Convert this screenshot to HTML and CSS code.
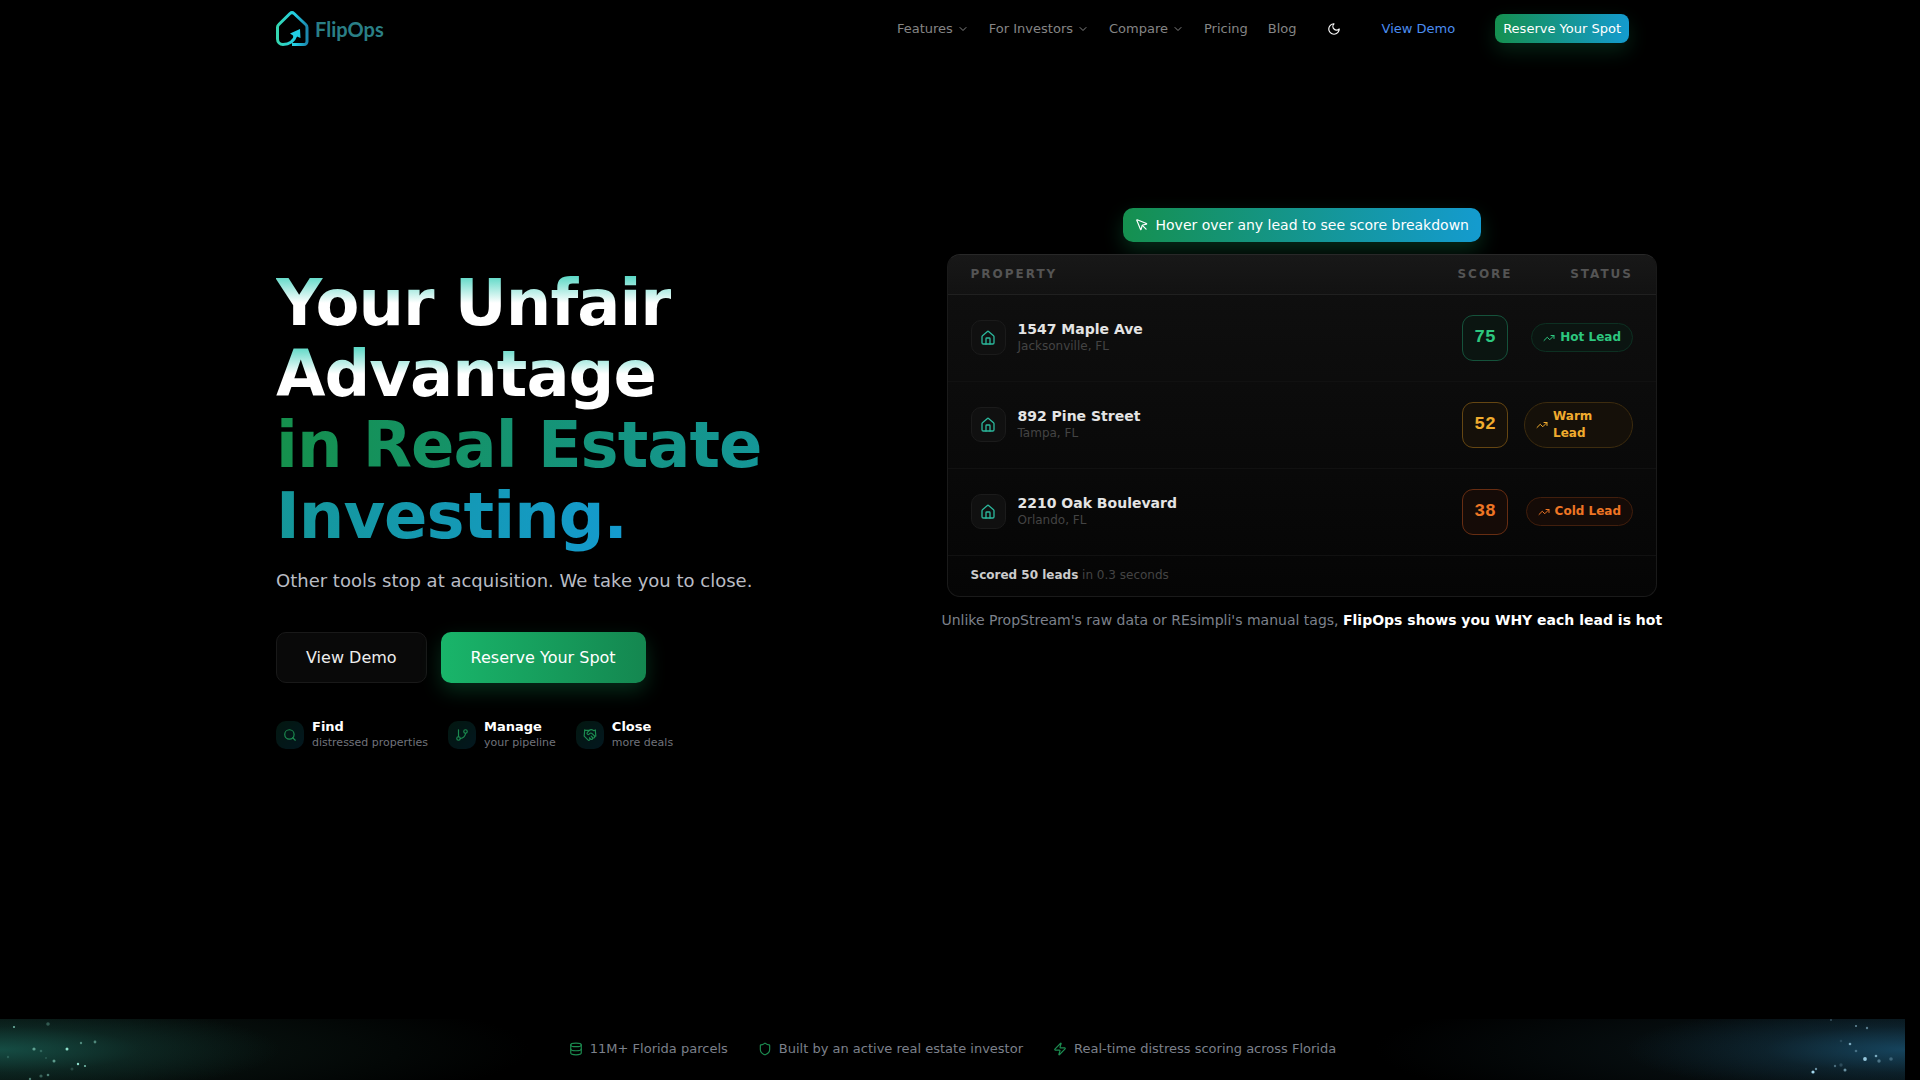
FILE: index.html
```html
<!DOCTYPE html>
<html lang="en">
<head>
    <meta charset="UTF-8">
    <meta name="viewport" content="width=device-width, initial-scale=1.0">
    <title>FlipOps</title>
    <link rel="stylesheet" href="styles.css">
</head>
<body>
    <!-- shared icons -->
    <svg class="sprite" aria-hidden="true">
        <symbol id="chevron" viewBox="0 0 24 24"><path d="m6 9 6 6 6-6"/></symbol>
        <symbol id="house" viewBox="0 0 24 24">
            <path d="M15 21v-8a1 1 0 0 0-1-1h-4a1 1 0 0 0-1 1v8"/>
            <path d="M3 10a2 2 0 0 1 .709-1.528l7-5.999a2 2 0 0 1 2.582 0l7 5.999A2 2 0 0 1 21 10v9a2 2 0 0 1-2 2H5a2 2 0 0 1-2-2z"/>
        </symbol>
        <symbol id="trend" viewBox="0 0 24 24">
            <path d="M16 7h6v6"/><path d="m22 7-8.5 8.5-5-5L2 17"/>
        </symbol>
    </svg>

    <header class="header">
        <div class="container header-inner">
            <a href="#" class="logo">
                <svg class="logo-mark" viewBox="0 0 34 36" fill="none">
                    <defs>
                        <linearGradient id="mark" x1="0" y1="0" x2="1" y2="0">
                            <stop offset="0" stop-color="#35d6b0"/>
                            <stop offset=".6" stop-color="#22cfe6"/>
                            <stop offset="1" stop-color="#1b86ad"/>
                        </linearGradient>
                    </defs>
                    <path d="M16 33.500h12a3 3 0 0 0 3-3V16.500a4 4 0 0 0-1.300-3L18 2.500a3 3 0 0 0-4 0L2.800 13.500a4 4 0 0 0-1.300 3V28a5.500 5.500 0 0 0 5.500 5.500c6 0 11-3.500 13-9.500" stroke="url(#mark)" stroke-width="3" stroke-linejoin="round"/>
                    <path d="M14 22.500 24 18l.500 9-3.500-1.500-3 3-1-4z" fill="#22cfe6"/>
                </svg>
                <span class="logo-text">FlipOps</span>
            </a>
            <nav class="nav">
                <button class="nav-item" type="button">Features <svg class="icon"><use href="#chevron"/></svg></button>
                <button class="nav-item" type="button">For Investors <svg class="icon"><use href="#chevron"/></svg></button>
                <button class="nav-item" type="button">Compare <svg class="icon"><use href="#chevron"/></svg></button>
                <a class="nav-item" href="#">Pricing</a>
                <a class="nav-item" href="#">Blog</a>
            </nav>
            <button class="theme-toggle" type="button" aria-label="Toggle theme">
                <svg class="icon" viewBox="0 0 24 24"><path d="M12 3a6 6 0 0 0 9 9 9 9 0 1 1-9-9Z"/></svg>
            </button>
            <a class="demo-link" href="#">View Demo</a>
            <a class="header-cta" href="#">Reserve Your Spot</a>
        </div>
    </header>

    <main class="container hero">
        <div class="hero-copy">
            <h1>
                <span class="title-top">Your Unfair<br>Advantage</span><br>
                <span class="title-accent">in Real Estate<br>Investing.</span>
            </h1>
            <p class="subtitle">Other tools stop at acquisition. We take you to close.</p>
            <div class="actions">
                <a class="btn btn-dark" href="#">View Demo</a>
                <a class="btn btn-green" href="#">Reserve Your Spot</a>
            </div>
            <ul class="features">
                <li>
                    <span class="feature-icon">
                        <svg class="icon" viewBox="0 0 24 24"><circle cx="11" cy="11" r="8"/><path d="m21 21-4.300-4.300"/></svg>
                    </span>
                    <div><strong>Find</strong><small>distressed properties</small></div>
                </li>
                <li>
                    <span class="feature-icon">
                        <svg class="icon" viewBox="0 0 24 24"><path d="M6 3v12"/><circle cx="18" cy="6" r="3"/><circle cx="6" cy="18" r="3"/><path d="M18 9a9 9 0 0 1-9 9"/></svg>
                    </span>
                    <div><strong>Manage</strong><small>your pipeline</small></div>
                </li>
                <li>
                    <span class="feature-icon">
                        <svg class="icon" viewBox="0 0 24 24"><path d="m11 17 2 2a1 1 0 1 0 3-3"/><path d="m14 14 2.500 2.500a1 1 0 1 0 3-3l-3.880-3.880a3 3 0 0 0-4.240 0l-.880.880a1 1 0 1 1-3-3l2.810-2.810a5.790 5.790 0 0 1 7.060-.870l.470.280a2 2 0 0 0 1.420.250L21 4"/><path d="m21 3 1 11h-2"/><path d="M3 3 2 14l6.500 6.500a1 1 0 1 0 3-3"/><path d="M3 4h8"/></svg>
                    </span>
                    <div><strong>Close</strong><small>more deals</small></div>
                </li>
            </ul>
        </div>

        <div class="hero-visual">
            <div class="hint">
                <svg class="icon" viewBox="0 0 24 24"><path d="M12.586 12.586 19 19"/><path d="M3.688 3.037a.497.497 0 0 0-.651.651l6.500 15.999a.501.501 0 0 0 .947-.062l1.569-6.083a2 2 0 0 1 1.448-1.479l6.124-1.579a.5.5 0 0 0 .063-.947z"/></svg>
                Hover over any lead to see score breakdown
            </div>
            <div class="card">
                <table class="leads">
                    <thead>
                        <tr>
                            <th class="col-property">Property</th>
                            <th class="col-score">Score</th>
                            <th class="col-status">Status</th>
                        </tr>
                    </thead>
                    <tbody>
                        <tr class="hot">
                            <td class="col-property">
                                <div class="property">
                                    <span class="property-icon"><svg class="icon"><use href="#house"/></svg></span>
                                    <div><strong>1547 Maple Ave</strong><small>Jacksonville, FL</small></div>
                                </div>
                            </td>
                            <td class="col-score"><span class="score">75</span></td>
                            <td class="col-status"><span class="pill"><svg class="icon"><use href="#trend"/></svg><span>Hot Lead</span></span></td>
                        </tr>
                        <tr class="warm">
                            <td class="col-property">
                                <div class="property">
                                    <span class="property-icon"><svg class="icon"><use href="#house"/></svg></span>
                                    <div><strong>892 Pine Street</strong><small>Tampa, FL</small></div>
                                </div>
                            </td>
                            <td class="col-score"><span class="score">52</span></td>
                            <td class="col-status"><span class="pill"><svg class="icon"><use href="#trend"/></svg><span>Warm Lead</span></span></td>
                        </tr>
                        <tr class="cold">
                            <td class="col-property">
                                <div class="property">
                                    <span class="property-icon"><svg class="icon"><use href="#house"/></svg></span>
                                    <div><strong>2210 Oak Boulevard</strong><small>Orlando, FL</small></div>
                                </div>
                            </td>
                            <td class="col-score"><span class="score">38</span></td>
                            <td class="col-status"><span class="pill"><svg class="icon"><use href="#trend"/></svg><span>Cold Lead</span></span></td>
                        </tr>
                    </tbody>
                </table>
                <div class="card-footer"><strong>Scored 50 leads</strong> in 0.3 seconds</div>
            </div>
            <p class="caption"><span>Unlike PropStream's raw data or REsimpli's manual tags, <strong>FlipOps shows you WHY each lead is hot</strong></span></p>
        </div>
    </main>

    <section class="trust">
        <svg class="sparks sparks-left" viewBox="0 0 110 61" fill="#8fe0cc" aria-hidden="true">
            <circle cx="14" cy="8" r="1" opacity=".8"/><circle cx="48" cy="5" r="1.800" opacity=".3"/>
            <circle cx="34" cy="30" r="1.600" opacity=".6"/><circle cx="41" cy="32" r="1.300" opacity=".25"/>
            <circle cx="67" cy="30" r="1.500"/><circle cx="81" cy="24" r="1.200" opacity=".5"/>
            <circle cx="95" cy="23" r="1.400" opacity=".5"/><circle cx="54" cy="42" r="1.500" opacity=".6"/>
            <circle cx="78" cy="45" r="1.200"/><circle cx="85" cy="47" r="1.100" opacity=".8"/>
            <circle cx="72" cy="50" r="1.500" opacity=".2"/><circle cx="48" cy="56" r="1.300" opacity=".5"/>
            <circle cx="41" cy="57" r="1.600" opacity=".35"/><circle cx="30" cy="60" r="1.200" opacity=".5"/>
            <circle cx="46" cy="39" r="1" opacity=".2"/><circle cx="8" cy="38" r="1.200" opacity=".2"/>
        </svg>
        <ul class="trust-list">
            <li>
                <svg class="icon" viewBox="0 0 24 24"><ellipse cx="12" cy="5" rx="9" ry="3"/><path d="M3 5v14a9 3 0 0 0 18 0V5"/><path d="M3 12a9 3 0 0 0 18 0"/></svg>
                11M+ Florida parcels
            </li>
            <li>
                <svg class="icon" viewBox="0 0 24 24"><path d="M20 13c0 5-3.500 7.500-7.660 8.950a1 1 0 0 1-.670-.010C7.500 20.500 4 18 4 13V6a1 1 0 0 1 1-1c2 0 4.500-1.200 6.240-2.720a1.170 1.170 0 0 1 1.520 0C14.510 3.810 17 5 19 5a1 1 0 0 1 1 1z"/></svg>
                Built by an active real estate investor
            </li>
            <li>
                <svg class="icon" viewBox="0 0 24 24"><path d="M4 14a1 1 0 0 1-.780-1.630l9.900-10.200a.5.5 0 0 1 .860.460l-1.920 6.020A1 1 0 0 0 13 10h7a1 1 0 0 1 .780 1.630l-9.900 10.200a.5.5 0 0 1-.860-.460l1.920-6.020A1 1 0 0 0 11 14z"/></svg>
                Real-time distress scoring across Florida
            </li>
        </ul>
        <svg class="sparks sparks-right" viewBox="0 0 110 61" fill="#a5d8ee" aria-hidden="true">
            <circle cx="36" cy="1" r="1" opacity=".3"/><circle cx="61" cy="7" r="1" opacity=".6"/>
            <circle cx="72" cy="9" r="1.200" opacity=".5"/><circle cx="46" cy="22" r="1.300" opacity=".15"/>
            <circle cx="55" cy="25" r="1.300" opacity=".7"/><circle cx="61" cy="32" r="1.300" opacity=".35"/>
            <circle cx="70" cy="40" r="1.900" opacity=".9"/><circle cx="81" cy="37" r="1.300" opacity=".7"/>
            <circle cx="84" cy="42" r="1.700" opacity=".4"/><circle cx="96" cy="40" r="1.800" opacity=".3"/>
            <circle cx="40" cy="47" r="1.200" opacity=".4"/><circle cx="46" cy="46" r="1.700" opacity=".2"/>
            <circle cx="50" cy="51" r="1.500" opacity=".6"/><circle cx="21" cy="50" r="1.200" opacity=".6"/>
            <circle cx="18" cy="53" r="1.600"/>
        </svg>
    </section>
</body>
</html>
```

FILE: styles.css
```css
* {
    box-sizing: border-box;
}
body {
    margin: 0;
    padding-right: 15px;
    min-height: 100vh;
    display: flex;
    flex-direction: column;
    background: #000;
    color: #fff;
    font-family: "DejaVu Sans", sans-serif;
    font-size: 13px;
}
a {
    color: inherit;
    text-decoration: none;
}
button {
    background: none;
    border: none;
    padding: 0;
    font: inherit;
    cursor: pointer;
}
ul {
    list-style: none;
    margin: 0;
    padding: 0;
}
.sprite {
    position: absolute;
    width: 0;
    height: 0;
}
.icon {
    width: 14px;
    height: 14px;
    flex-shrink: 0;
    fill: none;
    stroke: currentColor;
    stroke-width: 2;
    stroke-linecap: round;
    stroke-linejoin: round;
}
.container {
    width: 100%;
    max-width: 1401px;
    margin: 0 auto;
    padding: 0 24px;
}

/* header */
.header-inner {
    height: 57px;
    display: flex;
    align-items: center;
}
.logo {
    display: flex;
    align-items: center;
    gap: 5px;
    margin-right: auto;
}
.logo-mark {
    width: 34px;
    height: 36px;
}
.logo-text {
    font-family: Lato, sans-serif;
    font-size: 20px;
    font-weight: 700;
    color: #2a7f86;
}
.nav {
    display: flex;
    gap: 20px;
}
.nav-item {
    display: flex;
    align-items: center;
    gap: 4px;
    color: #858585;
}
.nav-item .icon {
    width: 12px;
    height: 12px;
}
.theme-toggle {
    display: flex;
    margin: 0 41px 0 30px;
    color: #fff;
}
.demo-link {
    color: #4b8df0;
    margin-right: 40px;
}
.header-cta {
    padding: 0 8px;
    line-height: 29px;
    border-radius: 8px;
    background: linear-gradient(90deg, #15904f, #149bcf);
    box-shadow: 0 8px 20px rgba(24, 181, 104, 0.2);
}

/* hero */
.hero {
    flex: 1;
    display: grid;
    grid-template-columns: minmax(0, 1fr) minmax(0, 1fr);
    gap: 48px;
    align-items: start;
    padding-top: 151px;
    padding-bottom: 48px;
}
.hero-copy {
    padding-top: 60px;
}
h1 {
    margin: 0 0 14px;
    font-size: 64px;
    line-height: 71px;
    font-weight: 700;
    letter-spacing: -1px;
    white-space: nowrap;
}
.title-top,
.title-accent {
    color: transparent;
    -webkit-background-clip: text;
    background-clip: text;
}
.title-top {
    background-image: linear-gradient(180deg, #1ec9b0, #fff 50%);
    -webkit-box-decoration-break: clone;
    box-decoration-break: clone;
}
.title-accent {
    background-image: linear-gradient(90deg, #15904c, #149bcf);
}
.subtitle {
    margin: 0 0 36px;
    font-size: 18px;
    line-height: 30px;
    color: #b9bcc4;
}
.actions {
    display: flex;
    gap: 14px;
    margin-bottom: 36px;
}
.btn {
    padding: 0 29px;
    line-height: 49px;
    border-radius: 10px;
    border: 1px solid transparent;
    font-size: 16px;
}
.btn-dark {
    background: #090909;
    border-color: #191919;
    color: #ededed;
}
.btn-green {
    background: linear-gradient(90deg, #19b56a, #148750) border-box;
    box-shadow: 0 8px 20px rgba(24, 181, 104, 0.25);
}
.features {
    display: flex;
    gap: 20px;
}
.features li {
    display: flex;
    align-items: center;
    gap: 8px;
}
.feature-icon {
    display: flex;
    align-items: center;
    justify-content: center;
    width: 28px;
    height: 28px;
    border-radius: 10px;
    background: linear-gradient(135deg, #031710, #03171f);
    color: #1c8c50;
}
.features strong,
.features small {
    display: block;
    white-space: nowrap;
}
.features strong {
    line-height: 16px;
}
.features small {
    font-size: 11px;
    line-height: 15px;
    color: #70737b;
}

/* lead table */
.hero-visual {
    margin: 0 -28px 0 -30px;
}
.hint {
    display: flex;
    align-items: center;
    gap: 7px;
    width: fit-content;
    margin: 0 auto 12px;
    padding: 0 12px;
    border-radius: 10px;
    background: linear-gradient(90deg, #15904f, #149bcf);
    box-shadow: 0 8px 20px rgba(24, 181, 104, 0.25);
    font-size: 14px;
    line-height: 34px;
}
.card {
    border: 1px solid #1a1a1a;
    border-top-color: #282828;
    border-radius: 13px;
    background: linear-gradient(180deg, #101010, #050505);
    overflow: hidden;
}
.leads {
    width: 100%;
    table-layout: fixed;
    border-collapse: collapse;
}
.leads th {
    height: 39px;
    padding: 0;
    background: linear-gradient(180deg, #181818, #121212);
    border-bottom: 1px solid #202020;
    color: #545454;
    font-size: 12px;
    letter-spacing: 2px;
    text-transform: uppercase;
    text-align: left;
}
.leads td {
    height: 87px;
    padding: 0;
    border-bottom: 1px solid #111;
}
.leads .col-property {
    padding-left: 23px;
}
.leads .col-score {
    width: 78px;
    text-align: center;
}
.leads .col-status {
    width: 132px;
    padding-right: 23px;
    text-align: right;
}
.property {
    display: flex;
    align-items: center;
    gap: 12px;
}
.property-icon {
    display: flex;
    align-items: center;
    justify-content: center;
    width: 35px;
    height: 35px;
    border: 1px solid #1b1b1b;
    border-radius: 10px;
    background: #101010;
    color: #2bb69b;
}
.property-icon .icon {
    width: 16px;
    height: 16px;
}
.property strong,
.property small {
    display: block;
}
.property strong {
    font-size: 14px;
    line-height: 17px;
    color: #e4e4e4;
}
.property small {
    font-size: 12px;
    line-height: 17px;
    color: #444;
}
.score {
    display: inline-block;
    width: 46px;
    height: 46px;
    line-height: 43px;
    border: 1px solid;
    border-radius: 11px;
    font-family: "Liberation Mono", monospace;
    font-size: 18px;
    font-weight: 700;
    text-align: center;
    vertical-align: middle;
}
.pill {
    display: inline-flex;
    align-items: center;
    gap: 5px;
    padding: 5px 11px;
    border: 1px solid;
    border-radius: 23px;
    font-size: 12px;
    line-height: 17px;
    font-weight: 700;
    text-align: left;
    vertical-align: middle;
}
.pill .icon {
    width: 12px;
    height: 12px;
}
.hot .score,
.hot .pill {
    color: #2dc77f;
    background: #0b1511;
    border-color: #0d3022;
}
.hot .score {
    border-color: #15523b;
}
.warm .score,
.warm .pill {
    color: #f0ab2e;
    background: #151009;
    border-color: #3d2c0f;
}
.warm .score {
    border-color: #654612;
}
.cold .score,
.cold .pill {
    color: #ee7524;
    background: #150b07;
    border-color: #421f0d;
}
.cold .score {
    border-color: #672d12;
}
.card-footer {
    padding: 0 23px 2px;
    line-height: 38px;
    font-size: 12px;
    color: #444;
}
.card-footer strong {
    color: #ccc;
}
.caption {
    display: flex;
    justify-content: center;
    margin: 13px 0 0;
    font-size: 14px;
    line-height: 20px;
    white-space: nowrap;
    color: #7c808b;
}
.caption strong {
    color: #fff;
}

/* bottom strip */
.trust {
    position: relative;
    min-height: 61px;
    padding-bottom: 2px;
    display: flex;
    align-items: center;
    justify-content: center;
    background:
        radial-gradient(ellipse 280px 46px at 0 50%, rgba(23, 88, 78, 0.8), rgba(23, 88, 78, 0.25) 50%, transparent),
        radial-gradient(ellipse 280px 46px at 100% 50%, rgba(24, 78, 108, 0.8), rgba(24, 78, 108, 0.25) 50%, transparent),
        radial-gradient(ellipse 530px 70px at 0 50%, #0d1c19, #060e0c 50%, transparent),
        radial-gradient(ellipse 530px 70px at 100% 50%, #0d1a1f, #060d0f 50%, transparent);
    overflow: hidden;
}
.trust-list {
    display: flex;
    gap: 30px;
    color: #7c808b;
}
.trust-list li {
    display: flex;
    align-items: center;
    gap: 7px;
}
.trust-list .icon {
    color: #1c8c50;
}
.sparks {
    position: absolute;
    top: 0;
    width: 110px;
    height: 61px;
}
.sparks-left {
    left: 0;
}
.sparks-right {
    right: 0;
}
```
